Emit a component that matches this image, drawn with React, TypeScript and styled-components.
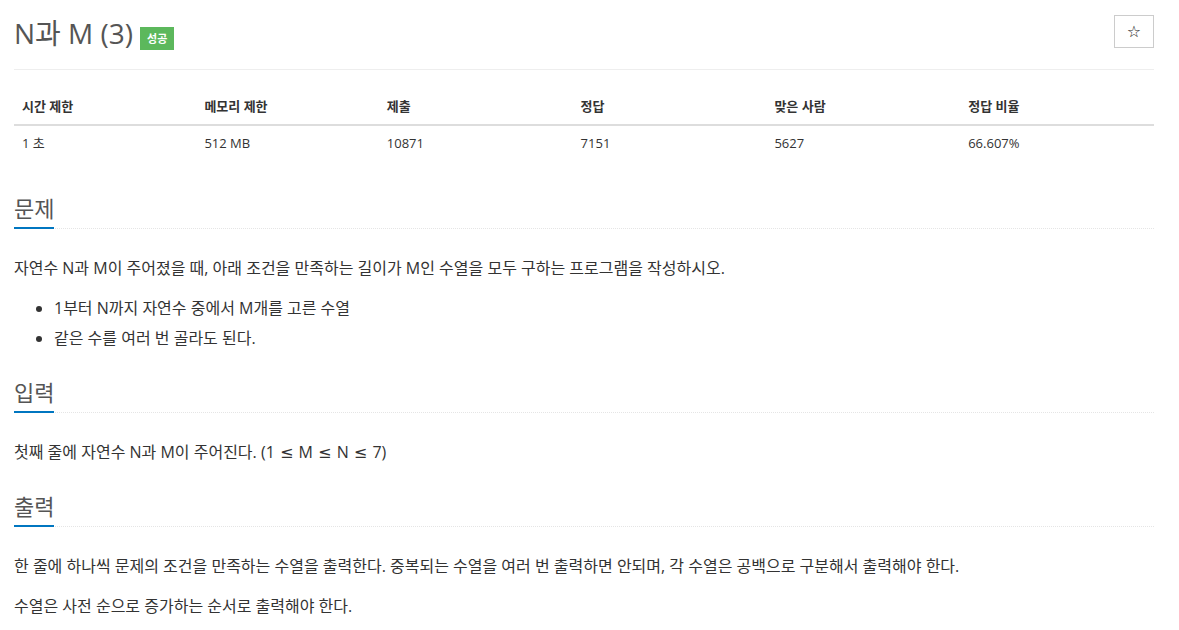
import styled, { createGlobalStyle } from 'styled-components';

const GlobalStyle = createGlobalStyle`
    body {
        margin: 0;
        background: #fff;
        color: #333;
        font-family: 'Open Sans', 'Noto Sans CJK KR', sans-serif;
        font-size: 14px;
    }
`;

const Container = styled.div`
    width: 1140px;
    margin-left: 14px;
    padding-top: 15px;
`;

const PageHeader = styled.div`
    display: flex;
    justify-content: space-between;
    align-items: flex-start;
    padding-bottom: 18px;
    border-bottom: 1px solid #eee;
`;

const Title = styled.h1`
    display: flex;
    align-items: flex-end;
    gap: 7px;
    margin: 0;
    font-size: 28px;
    font-weight: 400;
    line-height: 36px;
    color: #555;
`;

const Label = styled.span<{ $color: string }>`
    display: inline-block;
    margin-bottom: 1px;
    padding: 0 7px;
    background: ${(p) => p.$color};
    color: #fff;
    font-size: 11px;
    font-weight: 700;
    line-height: 23px;
`;

const StarButton = styled.button`
    width: 40px;
    height: 33px;
    padding: 0;
    background: #fff;
    border: 1px solid #ccc;
    color: #222;
    font-size: 16px;
    line-height: 1;
    font-family: 'DejaVu Sans', sans-serif;
    cursor: pointer;
`;

const StatsTable = styled.table`
    width: 100%;
    margin-top: 19px;
    border-collapse: collapse;
    font-size: 13px;
    line-height: 18.5px;

    th {
        padding: 8px;
        text-align: left;
        font-weight: 700;
        border-bottom: 2px solid #ddd;
    }

    td {
        padding: 8px;
    }
`;

const Section = styled.section<{ $first?: boolean }>`
    margin-top: ${(p) => (p.$first ? '35px' : '26px')};
`;

const Headline = styled.div`
    display: flex;
    border-bottom: 1px dotted #e5e5e5;
    margin-bottom: 24px;
`;

const HeadlineText = styled.h2`
    margin: 0 0 -1px;
    padding-bottom: 6px;
    font-size: 22px;
    font-weight: 400;
    line-height: 26px;
    color: #555;
    border-bottom: 2px solid #0076c0;
`;

const Text = styled.p`
    margin: 0 0 10px;
    font-size: 16px;
    line-height: 30px;
`;

const List = styled.ul`
    margin: 0 0 10px;
    padding-left: 40px;
    font-size: 16px;
    line-height: 30px;
`;

const Math = styled.span`
    font-family: 'DejaVu Sans', sans-serif;
    line-height: 1;
    margin: 0 1px;
`;

const stats = [
    { head: '시간 제한', value: '1 초', width: '16%' },
    { head: '메모리 제한', value: '512 MB', width: '16%' },
    { head: '제출', value: '10871', width: '17%' },
    { head: '정답', value: '7151', width: '17%' },
    { head: '맞은 사람', value: '5627', width: '17%' },
    { head: '정답 비율', value: '66.607%', width: '17%' },
];

function App() {
    return (
        <>
            <GlobalStyle />
            <Container>
                <PageHeader>
                    <Title>
                        N과 M (3)
                        <Label $color="#5cb85c">성공</Label>
                    </Title>
                    <StarButton>☆</StarButton>
                </PageHeader>

                <StatsTable>
                    <thead>
                        <tr>
                            {stats.map((s) => (
                                <th key={s.head} style={{ width: s.width }}>{s.head}</th>
                            ))}
                        </tr>
                    </thead>
                    <tbody>
                        <tr>
                            {stats.map((s) => (
                                <td key={s.head}>{s.value}</td>
                            ))}
                        </tr>
                    </tbody>
                </StatsTable>

                <Section $first>
                    <Headline>
                        <HeadlineText>문제</HeadlineText>
                    </Headline>
                    <Text>자연수 N과 M이 주어졌을 때, 아래 조건을 만족하는 길이가 M인 수열을 모두 구하는 프로그램을 작성하시오.</Text>
                    <List>
                        <li>1부터 N까지 자연수 중에서 M개를 고른 수열</li>
                        <li>같은 수를 여러 번 골라도 된다.</li>
                    </List>
                </Section>

                <Section>
                    <Headline>
                        <HeadlineText>입력</HeadlineText>
                    </Headline>
                    <Text>
                        첫째 줄에 자연수 N과 M이 주어진다. (1 <Math>≤</Math> M <Math>≤</Math> N <Math>≤</Math> 7)
                    </Text>
                </Section>

                <Section>
                    <Headline>
                        <HeadlineText>출력</HeadlineText>
                    </Headline>
                    <Text>한 줄에 하나씩 문제의 조건을 만족하는 수열을 출력한다. 중복되는 수열을 여러 번 출력하면 안되며, 각 수열은 공백으로 구분해서 출력해야 한다.</Text>
                    <Text>수열은 사전 순으로 증가하는 순서로 출력해야 한다.</Text>
                </Section>
            </Container>
        </>
    );
}

export default App;
